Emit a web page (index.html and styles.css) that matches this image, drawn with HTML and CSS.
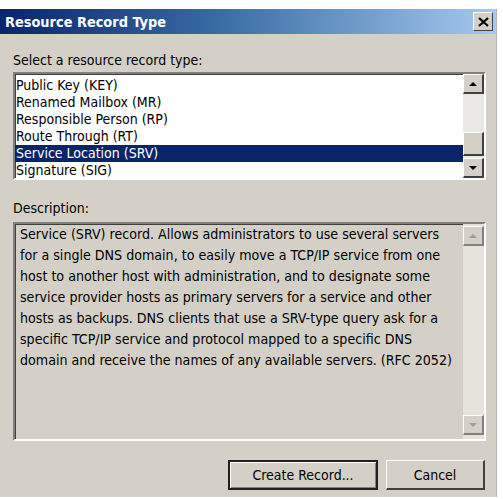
FILE: index.html
```html
<!DOCTYPE html>
<html lang="en">
  <head>
    <meta charset="UTF-8" />
    <title>Resource Record Type</title>
    <link rel="stylesheet" href="styles.css">
  </head>
  <body>
    <div class="dialog">
      <div class="titlebar">
        <span class="title">Resource Record Type</span>
        <span class="close-btn">
          <svg width="11" height="10" viewBox="0 0 11 10"><path d="M1 1 L10 9 M10 1 L1 9" stroke="#000" stroke-width="2.2"/></svg>
        </span>
      </div>
      <div class="dialog-body">
        <div class="label">Select a resource record type:</div>
        <div class="listbox">
          <div class="list-items">
            <div class="list-item">Public Key (KEY)</div>
            <div class="list-item">Renamed Mailbox (MR)</div>
            <div class="list-item">Responsible Person (RP)</div>
            <div class="list-item">Route Through (RT)</div>
            <div class="list-item selected">Service Location (SRV)</div>
            <div class="list-item">Signature (SIG)</div>
          </div>
          <div class="scrollbar">
            <div class="sb-btn"><span class="arrow up"></span></div>
            <div class="sb-track">
              <div class="sb-thumb"></div>
            </div>
            <div class="sb-btn"><span class="arrow down"></span></div>
          </div>
        </div>

        <div class="label desc-label">Description:</div>
        <div class="desc-box">
          <div class="desc-text">Service (SRV) record. Allows administrators to use several servers for a single DNS domain, to easily move a TCP/IP service from one host to another host with administration, and to designate some service provider hosts as primary servers for a service and other hosts as backups. DNS clients that use a SRV-type query ask for a specific TCP/IP service and protocol mapped to a specific DNS domain and receive the names of any available servers. (RFC 2052)</div>
          <div class="scrollbar disabled">
            <div class="sb-btn"><span class="arrow up"></span></div>
            <div class="sb-track"></div>
            <div class="sb-btn"><span class="arrow down"></span></div>
          </div>
        </div>

        <div class="buttons">
          <button class="btn default">Create Record...</button>
          <button class="btn">Cancel</button>
        </div>
      </div>
    </div>
  </body>
</html>
```

FILE: styles.css
```css
body {
  margin: 0;
  background: #ffffff;
  font-family: "DejaVu Sans Condensed", "DejaVu Sans", sans-serif;
}
.dialog {
  margin-top: 9px;
  width: 497px;
  height: 488px;
  background: #d4d0c8;
  box-sizing: border-box;
  border-right: 1px solid #b8b4ac;
}
.titlebar {
  height: 25px;
  display: flex;
  align-items: center;
  justify-content: space-between;
  padding: 0 3px 0 5px;
  background: linear-gradient(to right, #0a246a 0%, #3a6ea5 45%, #a6caf0 100%);
}
.title {
  color: #ffffff;
  font-weight: bold;
  font-size: 14.4px;
}
.close-btn {
  width: 18px;
  height: 17px;
  display: flex;
  align-items: center;
  justify-content: center;
  background: #d4d0c8;
  border-top: 1px solid #ffffff;
  border-left: 1px solid #ffffff;
  border-right: 1px solid #404040;
  border-bottom: 1px solid #404040;
}
.dialog-body {
  padding: 16px 10px 0 13px;
}
.label {
  font-size: 14px;
  line-height: 20px;
  color: #000000;
  height: 20px;
}
.desc-label {
  margin-top: 18px;
}
.listbox {
  margin-top: 2px;
  height: 108px;
  display: flex;
  box-sizing: border-box;
  background: #ffffff;
  border-top: 2px solid #808080;
  border-left: 2px solid #808080;
  border-right: 2px solid #ffffff;
  border-bottom: 2px solid #ffffff;
  box-shadow: inset 1px 1px 0 #404040;
}
.list-items {
  flex: 1;
  padding-top: 3px;
}
.list-item {
  height: 17px;
  line-height: 17px;
  font-size: 14px;
  padding-left: 1px;
  color: #000000;
  white-space: nowrap;
}
.list-item.selected {
  background: #0a246a;
  color: #ffffff;
}
.scrollbar {
  width: 21px;
  display: flex;
  flex-direction: column;
  background: #ebe9e5;
}
.sb-btn {
  height: 20px;
  box-sizing: border-box;
  display: flex;
  align-items: center;
  justify-content: center;
  background: #d4d0c8;
  border-top: 1px solid #ffffff;
  border-left: 1px solid #ffffff;
  border-right: 2px solid #404040;
  border-bottom: 2px solid #404040;
}
.sb-track {
  flex: 1;
  display: flex;
  flex-direction: column;
  justify-content: flex-end;
  padding-bottom: 2px;
}
.sb-thumb {
  height: 24px;
  box-sizing: border-box;
  background: #d4d0c8;
  border-top: 1px solid #ffffff;
  border-left: 1px solid #ffffff;
  border-right: 2px solid #404040;
  border-bottom: 2px solid #404040;
}
.arrow {
  width: 0;
  height: 0;
  border-left: 4px solid transparent;
  border-right: 4px solid transparent;
}
.arrow.up {
  border-bottom: 4px solid #000000;
}
.arrow.down {
  border-top: 4px solid #000000;
}
.scrollbar.disabled .arrow.up {
  border-bottom-color: #a09c94;
}
.scrollbar.disabled .arrow.down {
  border-top-color: #a09c94;
}
.scrollbar.disabled .sb-btn {
  border-right-color: #808080;
  border-bottom-color: #808080;
}
.desc-box {
  margin-top: 4px;
  height: 219px;
  display: flex;
  box-sizing: border-box;
  background: #d4d0c8;
  border-top: 2px solid #808080;
  border-left: 2px solid #808080;
  border-right: 2px solid #ffffff;
  border-bottom: 2px solid #ffffff;
  box-shadow: inset 1px 1px 0 #404040;
}
.desc-text {
  flex: 1;
  padding: 0 6px 0 5px;
  font-size: 14.1px;
  line-height: 21px;
  color: #000000;
}
.desc-box .scrollbar {
  padding: 2px 0 4px;
  background: #e6e3dd;
}
.buttons {
  display: flex;
  justify-content: flex-end;
  gap: 8px;
  margin-top: 19px;
  padding-right: 1px;
}
.btn {
  height: 30px;
  box-sizing: border-box;
  font-family: inherit;
  font-size: 14px;
  color: #000000;
  background: #d4d0c8;
  border-top: 1px solid #ffffff;
  border-left: 1px solid #ffffff;
  border-right: 2px solid #404040;
  border-bottom: 2px solid #404040;
  padding: 0;
}
.btn.default {
  width: 150px;
  border: 2px solid #202020;
  box-shadow: inset 1px 1px 0 #ffffff, inset -1px -1px 0 #808080;
}
.btn:not(.default) {
  width: 99px;
}
```
